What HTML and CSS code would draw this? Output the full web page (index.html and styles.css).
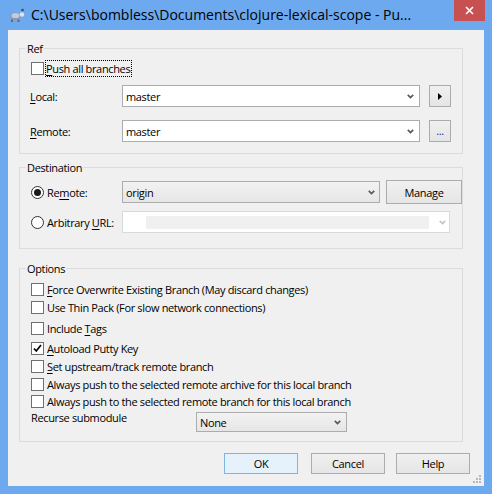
FILE: index.html
```html
<!DOCTYPE html>
<html lang="en">
<head>
    <meta charset="UTF-8">
    <meta name="viewport" content="width=device-width, initial-scale=1.0">
    <title>Push</title>
    <link rel="stylesheet" href="styles.css">
</head>
<body>
    <div class="window">
        <!-- Title bar -->
        <div class="titlebar">
            <svg class="app-icon" width="16" height="16" viewBox="0 0 16 16">
                <ellipse cx="6.5" cy="9.5" rx="5.5" ry="4" fill="#8c9bb3"/>
                <ellipse cx="6.5" cy="8.5" rx="4" ry="2.6" fill="#c3cad8"/>
                <circle cx="13" cy="7.5" r="2.2" fill="#dfe4ec"/>
                <rect x="2" y="12.5" width="2" height="2.5" fill="#5d6a80"/>
                <rect x="8.5" y="12.5" width="2" height="2.5" fill="#5d6a80"/>
                <circle cx="13.5" cy="3" r="1.3" fill="#3b4a63"/>
            </svg>
            <span class="title">C:\Users\bombless\Documents\clojure-lexical-scope - Pu...</span>
            <div class="close">
                <svg width="9" height="9" viewBox="0 0 9 9">
                    <path d="M1 1 L8 8 M8 1 L1 8" stroke="#fff" stroke-width="1.6"/>
                </svg>
            </div>
        </div>

        <div class="client">
            <!-- Ref group -->
            <div class="group ref">
                <span class="group-title">Ref</span>
                <div class="check push-all">
                    <span class="box"></span>
                    <span class="focus"><u>P</u>ush all branches</span>
                </div>
                <div class="row ref-local">
                    <span class="lbl"><u>L</u>ocal:</span>
                    <div class="combo ref-combo">
                        <span>master</span>
                        <svg class="chev" width="7" height="5" viewBox="0 0 7 5"><polyline points="0.8,0.8 3.5,3.6 6.2,0.8" fill="none" stroke="#5a5a5a" stroke-width="1.7"/></svg>
                    </div>
                    <button class="btn small">
                        <svg width="4" height="7" viewBox="0 0 4 7"><polygon points="0,0 4,3.5 0,7" fill="#000"/></svg>
                    </button>
                </div>
                <div class="row ref-remote">
                    <span class="lbl"><u>R</u>emote:</span>
                    <div class="combo ref-combo">
                        <span>master</span>
                        <svg class="chev" width="7" height="5" viewBox="0 0 7 5"><polyline points="0.8,0.8 3.5,3.6 6.2,0.8" fill="none" stroke="#5a5a5a" stroke-width="1.7"/></svg>
                    </div>
                    <button class="btn small dots">...</button>
                </div>
            </div>

            <!-- Destination group -->
            <div class="group dest">
                <span class="group-title">Destination</span>
                <div class="row dest-remote">
                    <div class="radio">
                        <span class="circle on"></span>
                        <span>Re<u>m</u>ote:</span>
                    </div>
                    <div class="combo list origin">
                        <span>origin</span>
                        <svg class="chev" width="7" height="5" viewBox="0 0 7 5"><polyline points="0.8,0.8 3.5,3.6 6.2,0.8" fill="none" stroke="#5a5a5a" stroke-width="1.7"/></svg>
                    </div>
                    <button class="btn manage">Mana<u>g</u>e</button>
                </div>
                <div class="row dest-url">
                    <div class="radio">
                        <span class="circle"></span>
                        <span>Arbitrary <u>U</u>RL:</span>
                    </div>
                    <div class="combo disabled url">
                        <span class="field"></span>
                        <svg class="chev" width="7" height="5" viewBox="0 0 7 5"><polyline points="0.8,0.8 3.5,3.6 6.2,0.8" fill="none" stroke="#c4c4c4" stroke-width="1.7"/></svg>
                    </div>
                </div>
            </div>

            <!-- Options group -->
            <div class="group opts">
                <span class="group-title">Options</span>
                <div class="check opt-1"><span class="box"></span><span><u>F</u>orce Overwrite Existing Branch (May discard changes)</span></div>
                <div class="check opt-2"><span class="box"></span><span>Use Thin Pack (For slow network connections)</span></div>
                <div class="check opt-3"><span class="box"></span><span>Include <u>T</u>ags</span></div>
                <div class="check opt-4">
                    <span class="box">
                        <svg width="11" height="11" viewBox="0 0 11 11"><polyline points="2,5.5 4.3,8 9,2" fill="none" stroke="#000" stroke-width="1.7"/></svg>
                    </span>
                    <span><u>A</u>utoload Putty Key</span>
                </div>
                <div class="check opt-5"><span class="box"></span><span><u>S</u>et upstream/track remote branch</span></div>
                <div class="check opt-6"><span class="box"></span><span>Always push to the selected remote archive for this local branch</span></div>
                <div class="check opt-7"><span class="box"></span><span>Always push to the selected remote branch for this local branch</span></div>
                <div class="row recurse">
                    <span class="lbl recurse-lbl">Recurse submodule</span>
                    <div class="combo list none">
                        <span>None</span>
                        <svg class="chev" width="7" height="5" viewBox="0 0 7 5"><polyline points="0.8,0.8 3.5,3.6 6.2,0.8" fill="none" stroke="#5a5a5a" stroke-width="1.7"/></svg>
                    </div>
                </div>
            </div>

            <!-- Dialog buttons -->
            <div class="buttons">
                <button class="btn default">OK</button>
                <button class="btn cancel">Cancel</button>
                <button class="btn help">Help</button>
            </div>

            <!-- Resize grip -->
            <svg class="grip" width="8" height="8" viewBox="0 0 8 8">
                <rect x="6" y="0" width="2" height="2" fill="#b8b8b8"/>
                <rect x="3" y="3" width="2" height="2" fill="#b8b8b8"/>
                <rect x="6" y="3" width="2" height="2" fill="#b8b8b8"/>
                <rect x="0" y="6" width="2" height="2" fill="#b8b8b8"/>
                <rect x="3" y="6" width="2" height="2" fill="#b8b8b8"/>
                <rect x="6" y="6" width="2" height="2" fill="#b8b8b8"/>
            </svg>
        </div>
    </div>
</body>
</html>
```

FILE: styles.css
```css
/* Reset and base font */
* {
    box-sizing: border-box;
}

body {
    margin: 0;
    font-family: "Open Sans", "Noto Sans", sans-serif;
    font-size: 11px;
    letter-spacing: -0.35px;
    line-height: 15px;
    color: #000;
}

u {
    text-decoration-thickness: 1px;
    text-underline-offset: 2px;
}

/* Window frame */
.window {
    width: 492px;
    height: 494px;
    background-color: #6ca9ef;
    display: flex;
    flex-direction: column;
}

.titlebar {
    height: 30px;
    display: flex;
    align-items: flex-start;
    padding: 0 7px 0 9px;
}

.app-icon {
    margin-top: 7px;
}

.title {
    flex: 1;
    margin-left: 6px;
    margin-top: 6px;
    font-size: 14px;
    line-height: 18px;
    letter-spacing: 0;
    white-space: nowrap;
    overflow: hidden;
}

.close {
    width: 31px;
    height: 21px;
    background-color: #c75050;
    display: flex;
    align-items: center;
    justify-content: center;
}

/* Dialog client area */
.client {
    position: relative;
    margin: 0 8px;
    height: 456px;
    background-color: #f0f0f0;
    padding: 18px 0 0 11px;
}

/* Group boxes */
.group {
    position: relative;
    width: 444px;
    border: 1px solid #dcdcdc;
}

.group-title {
    position: absolute;
    top: -8px;
    left: 6px;
    padding: 0 1px;
    background-color: #f0f0f0;
}

.ref {
    height: 106px;
}

.dest {
    height: 82px;
    margin-top: 13px;
}

.opts {
    height: 174px;
    margin-top: 19px;
}

/* Rows */
.row {
    display: flex;
    align-items: center;
}

.lbl {
    width: 92px;
    margin-left: 10px;
}

/* Checkboxes */
.check {
    display: flex;
    align-items: center;
    height: 15px;
    padding-left: 11px;
}

.box {
    width: 13px;
    height: 13px;
    border: 1px solid #707070;
    background-color: #fff;
    margin-right: 3px;
    display: flex;
    align-items: center;
    justify-content: center;
}

.focus {
    outline: 1px dotted #000;
    padding: 0 1px 0 0;
    margin-left: -1px;
}

.push-all {
    margin-top: 12px;
}

.ref-local {
    height: 22px;
    margin-top: 9px;
}

.ref-remote {
    height: 22px;
    margin-top: 13px;
}

/* Radio buttons */
.radio {
    width: 102px;
    padding-left: 11px;
    display: flex;
    align-items: center;
}

.circle {
    width: 13px;
    height: 13px;
    border: 1px solid #333;
    border-radius: 50%;
    background-color: #fff;
    margin-right: 3px;
    display: flex;
    align-items: center;
    justify-content: center;
}

.circle.on::after {
    content: "";
    width: 7px;
    height: 7px;
    border-radius: 50%;
    background-color: #1a1a1a;
}

.dest-remote {
    height: 24px;
    margin-top: 12px;
}

.dest-url {
    height: 22px;
    margin-top: 7px;
}

/* Combo boxes */
.combo {
    height: 22px;
    border: 1px solid #abadb3;
    background-color: #fff;
    display: flex;
    align-items: center;
    padding-left: 3px;
}

.combo .chev {
    margin-left: auto;
    margin-right: 5px;
}

.ref-combo {
    width: 298px;
}

.combo.list {
    border-color: #acacac;
    background: linear-gradient(#f2f2f2, #e6e6e6);
}

.origin {
    width: 258px;
}

.origin .chev {
    margin-right: 4px;
}

.combo.disabled {
    border-color: #d9d9d9;
    padding-left: 23px;
}

.url {
    width: 328px;
}

.url .chev {
    margin-right: 3px;
}

.field {
    width: 283px;
    height: 13px;
    background-color: #f0f0f0;
}

.none {
    width: 151px;
    height: 20px;
}

/* Buttons */
.btn {
    font: inherit;
    letter-spacing: inherit;
    color: #000;
    padding: 0;
    border: 1px solid #acacac;
    background: linear-gradient(#f0f0f0, #e5e5e5);
    display: flex;
    align-items: center;
    justify-content: center;
}

.small {
    width: 22px;
    height: 22px;
    margin-left: 9px;
}

.dots {
    color: #1c1c8c;
    align-items: flex-end;
    padding-bottom: 3px;
}

.manage {
    width: 76px;
    height: 24px;
    margin-left: 6px;
}

/* Options rows */
.opt-1 { margin-top: 13px; }
.opt-2 { margin-top: 3px; }
.opt-3 { margin-top: 6px; }
.opt-4 { margin-top: 5px; }
.opt-5 { margin-top: 3px; }
.opt-6 { margin-top: 3px; }
.opt-7 { margin-top: 2px; }

.recurse {
    height: 21px;
    margin-top: 3px;
    align-items: flex-start;
}

.recurse-lbl {
    width: 165px;
    margin-left: 11px;
    margin-top: -2px;
}

/* Bottom buttons */
.buttons {
    display: flex;
    justify-content: flex-end;
    margin-top: 11px;
    padding-right: 14px;
}

.buttons .btn {
    width: 74px;
    height: 21px;
}

.btn.default {
    border-color: #7eb4ea;
    background: #e5f1fb;
}

.cancel {
    margin-left: 13px;
}

.help {
    margin-left: 11px;
}

.grip {
    position: absolute;
    right: 3px;
    bottom: 3px;
}
```
